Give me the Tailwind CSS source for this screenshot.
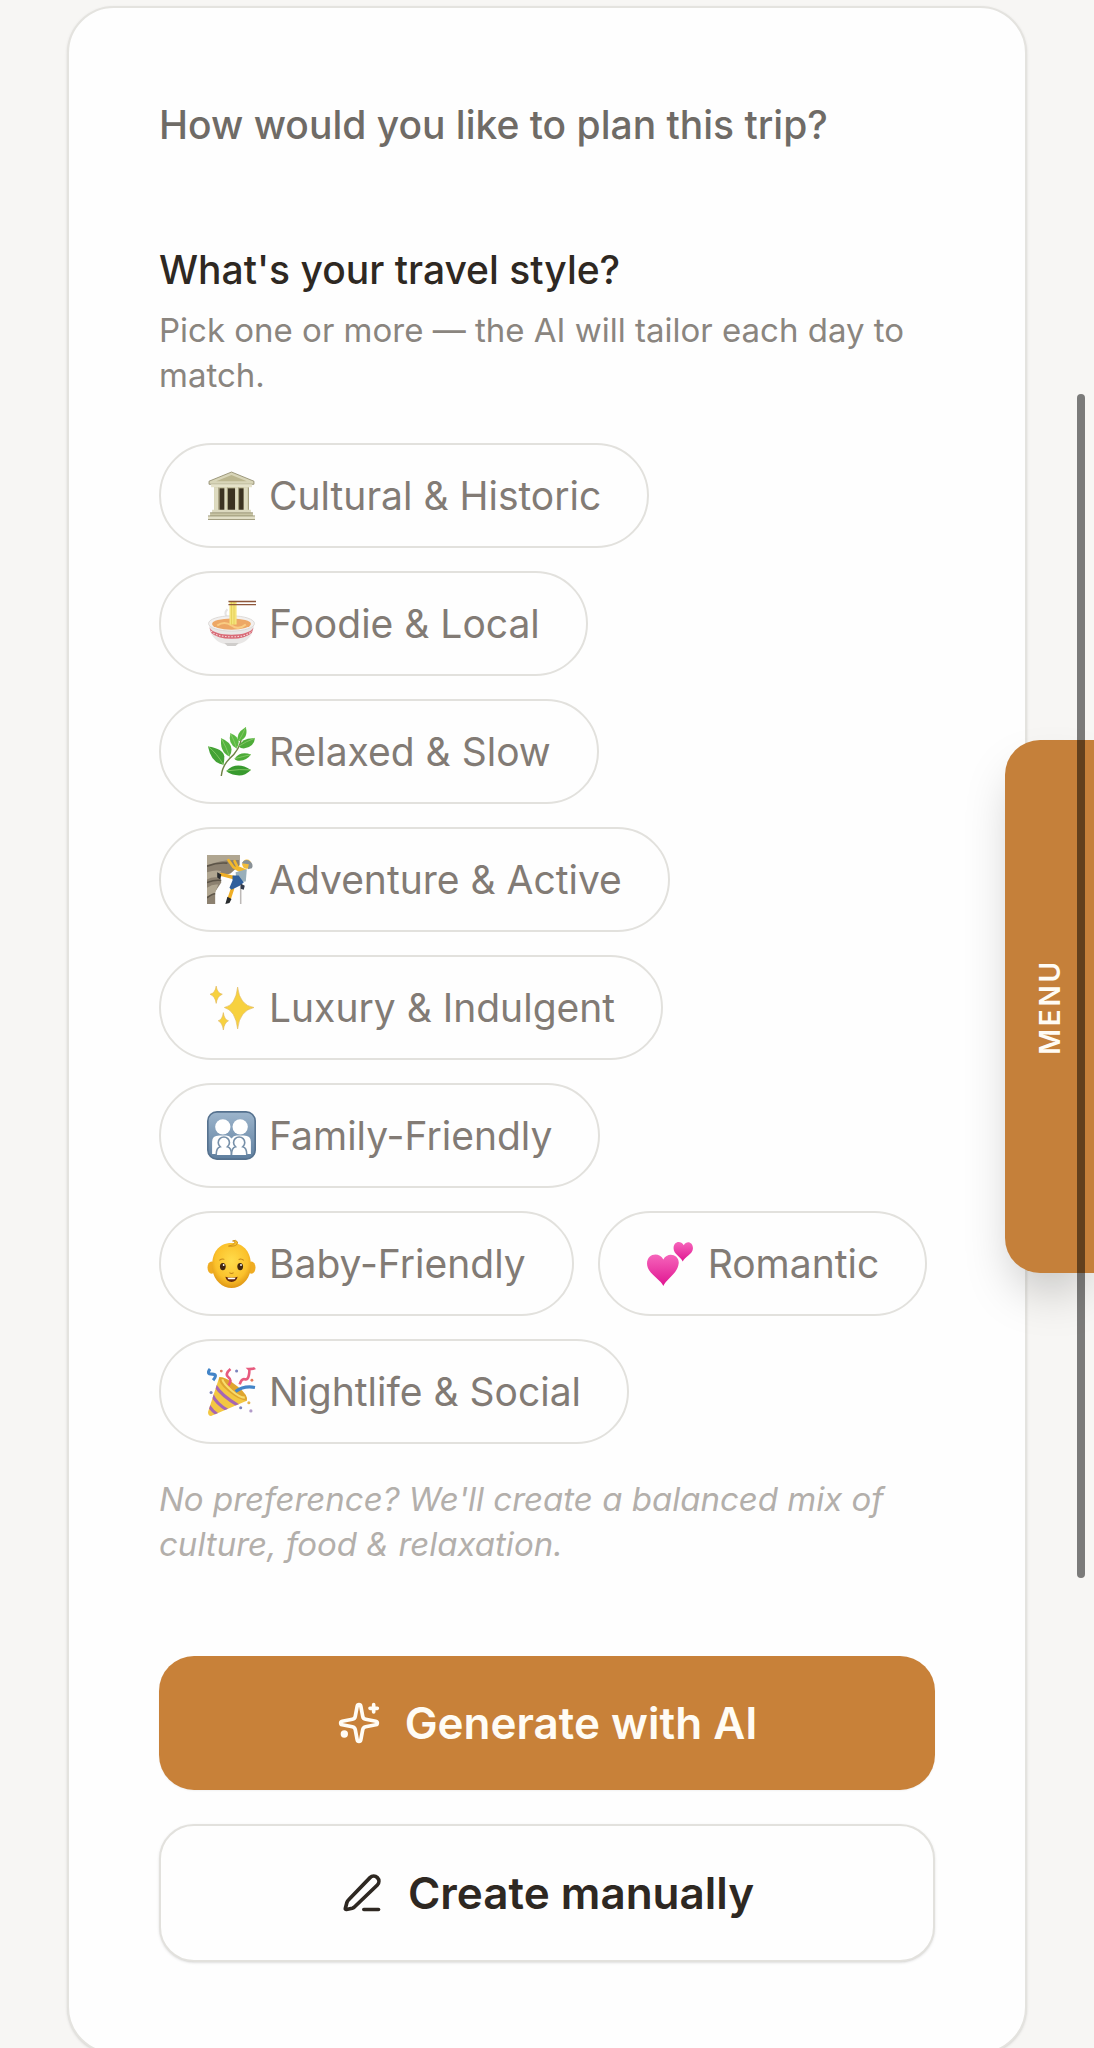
<!DOCTYPE html>
<html lang="en">
<head>
  <meta charset="UTF-8" />
  <meta name="viewport" content="width=device-width, initial-scale=1.0" />
  <title>Plan your trip</title>
  <script src="https://cdn.jsdelivr.net/npm/@tailwindcss/browser@4"></script>
</head>

<body class="relative bg-[#f7f6f4] pt-[6px] px-[67px] font-[Inter,sans-serif] text-[#2e2822] overflow-x-hidden">

  <!-- Planner card -->
  <main class="bg-[#fefefe] border-2 border-[#e4e3df] rounded-[47px] p-[90px] pt-[89px] shadow-sm">
    <h2 class="text-[39px] leading-[56px] font-medium text-[#6f6b66]">How would you like to plan this trip?</h2>

    <!-- Travel style -->
    <section class="mt-[89px]">
      <h3 class="text-[39px] leading-[56px] font-medium">What's your travel style?</h3>
      <p class="mt-[10px] text-[33px] leading-[45px] text-[#8a857f]">Pick one or more — the AI will tailor each day to match.</p>

      <div class="mt-[45px] flex flex-wrap gap-x-6 gap-y-[23px] text-[39px] leading-[53px] text-[#827b75]">
        <button type="button" class="flex items-center gap-[13px] border-2 border-[#e2e1dd] rounded-full px-[46px] py-6">
          <svg class="size-[49px]" viewBox="0 0 48 48" aria-hidden="true">
            <path d="M7 15h34v25H7z" fill="#bdb895" />
            <path d="M12 17h24v22H12z" fill="#3b3221" />
            <path d="M7 16h5v23H7zM17 16h3.500v23H17zM27.500 16h3.500v23h-3.500zM36 16h5v23h-5z" fill="#dedbc0" />
            <path d="M11.500 16v23M20 16v23M31 16v23M40.500 16v23" stroke="#a09a78" />
            <path d="M24 1L46 10v3H2v-3z" fill="#d8d5b8" stroke="#8c8768" stroke-width=".8" />
            <path d="M24 4l15 6H9z" fill="#bbb68f" />
            <path d="M4 13h40v3H4z" fill="#e5e2c9" />
            <path d="M5 38h38v3H5z" fill="#dcd9bf" />
            <path d="M3 41h42v3H3z" fill="#c9c5a5" />
            <path d="M1 44h46v3.500H1z" fill="#e3e0c8" />
            <path d="M3 41h42M1 44h46M1 47.500h46" stroke="#8f8a6b" stroke-width=".8" />
          </svg>
          Cultural &amp; Historic
        </button>
        <button type="button" class="flex items-center gap-[13px] border-2 border-[#e2e1dd] rounded-full px-[46px] py-6">
          <svg class="size-[49px]" viewBox="0 0 48 48" aria-hidden="true">
            <path d="M20 10q-4 4 0 8" fill="none" stroke="#e5e3e2" stroke-width="2" />
            <path d="M2 24c0 12 8 21 22 21s22-9 22-21z" fill="#e9e7e6" />
            <path d="M2.500 28q4 7 21.500 7t21.500-7l-1.500 5q-6 6-20 6T4 33z" fill="#d96c78" />
            <path d="M4 31.500q5 5.500 20 5.500t20-5.500" fill="none" stroke="#f7dde0" stroke-width="1" stroke-dasharray="1.500 1.500" />
            <path d="M17 43h14l-3 3h-8z" fill="#cfcdcb" />
            <ellipse cx="24" cy="24" rx="22.500" ry="7.500" fill="#f2f0ef" stroke="#d8d4d2" stroke-width=".8" />
            <ellipse cx="24" cy="24.500" rx="19" ry="5.500" fill="#eda765" />
            <path d="M10 26q7-5 14 0t14-1" fill="none" stroke="#f9cc83" stroke-width="2" />
            <path d="M22 2h7v23h-7z" fill="#f5e47b" />
            <path d="M24 2v23M26.500 2v23" stroke="#e2cc51" stroke-width=".7" />
            <path d="M21 2.500h27M21 5.500h27" stroke="#8d553a" stroke-width="1.400" />
          </svg>
          Foodie &amp; Local
        </button>
        <button type="button" class="flex items-center gap-[13px] border-2 border-[#e2e1dd] rounded-full px-[46px] py-6">
          <svg class="size-[49px]" viewBox="0 0 48 48" aria-hidden="true">
            <path d="M14 48q1-10 8-17 10-8 12-21" fill="none" stroke="#6e8145" stroke-width="1.400" />
            <path d="M1 19q15 2 16 10 0 5-1 8Q4 35 1 19z" fill="#43a235" />
            <path d="M14 11q10 4 10 11 0 4-2 7-10-5-8-18z" fill="#53b13e" />
            <path d="M23 6q8 3 8 9 0 3-2 6-9-5-6-15z" fill="#5bba43" />
            <path d="M38 0q3 11-7 14-4-7 7-14z" fill="#59b740" />
            <path d="M47 11q-1 9-11 10-3 0-5-2 4-9 16-8z" fill="#4eac39" />
            <path d="M43 27q-4 6-11 6-4 0-5-2 6-8 16-4z" fill="#4cab38" />
            <path d="M43 42q-7 7-15 5-6-1-9-4 10-10 24-1z" fill="#389a2e" />
            <path d="M1 19q9 7 15 18M14 11q5 9 8 18M23 6q4 8 6 15M38 0q-3 7-7 14M47 11q-9 3-16 8M43 27q-8 2-16 4M43 42q-11-1-24 1" fill="none" stroke="#8ccb6c" stroke-width=".8" />
          </svg>
          Relaxed &amp; Slow
        </button>
        <button type="button" class="flex items-center gap-[13px] border-2 border-[#e2e1dd] rounded-full px-[46px] py-6">
          <svg class="size-[49px]" viewBox="0 0 48 48" aria-hidden="true">
            <path d="M0 0h32v10l-9 8-10 3 1 6-6 9v12H0z" fill="#8c8170" />
            <path d="M0 0h32v5q-16-1-32 5zM0 17q9-3 14-1l-3 6q-6-1-11 2zM0 32q6-4 11-3l-3 8-8 4z" fill="#b0a691" />
            <path d="M0 11q10-4 20-3M0 27q8-3 14-2M0 42q5-4 8-4" fill="none" stroke="#5d5548" stroke-width="1.600" />
            <path d="M33 27v21" stroke="#bdb9b7" stroke-width="1.500" />
            <path d="M35 17l-9-5-5-7M37 15l-7-3-3-6" fill="none" stroke="#f3b82c" stroke-width="2.600" stroke-linecap="round" />
            <path d="M26 22l-12-3M25 33l-3 9" stroke="#efae25" stroke-width="3.400" stroke-linecap="round" />
            <path d="M28 17l11-3-1 12-9 1z" fill="#98aeb9" />
            <path d="M25 20h6l5 7-4 3-8 4-2-2 3-7z" fill="#2f5f9c" />
            <circle cx="39" cy="9" r="4.500" fill="#f3bd3a" />
            <path d="M34 8q3-5 8-2 4 3 2 7l-4 1 1-5z" fill="#899197" />
            <path d="M10 17l4 2-1 5-3-2zM20 41l4 2-2 4-4 1z" fill="#282b2e" />
            <path d="M33 28l4 2-1 4-3-1z" fill="#343b4b" />
          </svg>
          Adventure &amp; Active
        </button>
        <button type="button" class="flex items-center gap-[13px] border-2 border-[#e2e1dd] rounded-full px-[46px] py-6">
          <svg class="size-[49px]" viewBox="0 0 48 48" aria-hidden="true">
            <g fill="#f7d13f" stroke="#dfb75a" stroke-width=".6">
              <path d="M30 4q2 18 16 20-14 3-16 21-2-18-13-21 11-2 13-20z" />
              <path d="M9 3q1 7 6 8-5 2-6 9-1-7-6-9 5-1 6-8z" />
              <path d="M16 29q1 7 5 8-4 2-5 9-1-7-5-9 4-1 5-8z" />
            </g>
          </svg>
          Luxury &amp; Indulgent
        </button>
        <button type="button" class="flex items-center gap-[13px] border-2 border-[#e2e1dd] rounded-full px-[46px] py-6">
          <svg class="size-[49px]" viewBox="0 0 48 48" aria-hidden="true">
            <defs>
              <linearGradient id="tile" x1="0" y1="0" x2="0" y2="1">
                <stop offset="0" stop-color="#9db5cc" />
                <stop offset="1" stop-color="#5f7f9f" />
              </linearGradient>
            </defs>
            <rect x=".8" y=".8" width="46.400" height="46.400" rx="9" fill="url(#tile)" stroke="#56728f" stroke-width="1.600" />
            <g fill="#fff">
              <circle cx="15.500" cy="15.500" r="7.500" />
              <circle cx="32.500" cy="15.500" r="7.500" />
              <path d="M5 42V30q0-6 7-6h7q3 0 5 3 2-3 5-3h7q7 0 7 6v12z" />
            </g>
            <g fill="#fff" stroke="#7790a9" stroke-width="1.600">
              <path d="M9 43q0-7 4-8-2-2-2-4a5.500 5.500 0 0 1 11 0q0 2-2 4 4 1 4 8" />
              <path d="M24 43q0-7 4-8-2-2-2-4a5.500 5.500 0 0 1 11 0q0 2-2 4 4 1 4 8" />
            </g>
          </svg>
          Family-Friendly
        </button>
        <button type="button" class="flex items-center gap-[13px] border-2 border-[#e2e1dd] rounded-full px-[46px] py-6">
          <svg class="size-[49px]" viewBox="0 0 48 48" aria-hidden="true">
            <defs>
              <radialGradient id="skin" cx=".5" cy=".4" r=".6">
                <stop offset="0" stop-color="#ffdc4b" />
                <stop offset=".7" stop-color="#fbc12b" />
                <stop offset="1" stop-color="#df9614" />
              </radialGradient>
            </defs>
            <ellipse cx="4.500" cy="28" rx="4" ry="6" fill="#efac22" />
            <ellipse cx="43.500" cy="28" rx="4" ry="6" fill="#efac22" />
            <path d="M24 4c13 0 19 10 19 22 0 13-9 22-19 22S5 39 5 26C5 14 11 4 24 4z" fill="url(#skin)" />
            <path d="M21 7q9 1 9-4-2-3-5-1 3 0 2 2t-6 3z" fill="#f5bd2b" stroke="#c98b17" stroke-width=".8" />
            <ellipse cx="15.500" cy="27" rx="2.800" ry="3.600" fill="#42270f" />
            <ellipse cx="32.500" cy="27" rx="2.800" ry="3.600" fill="#42270f" />
            <circle cx="16.300" cy="25.500" r=".9" fill="#fff" />
            <circle cx="33.300" cy="25.500" r=".9" fill="#fff" />
            <path d="M12 21q3-2 5-1M31 20q3-1 5 1M22 33q2 1.500 4 0" fill="none" stroke="#c48619" stroke-width="1" />
            <path d="M18 37q6 2 12 0-1 5-6 5t-6-5z" fill="#63280e" />
            <path d="M20 38h8l-1 1.500h-6z" fill="#fff" />
          </svg>
          Baby-Friendly
        </button>
        <button type="button" class="flex items-center gap-[13px] border-2 border-[#e2e1dd] rounded-full px-[46px] py-6">
          <svg class="size-[49px]" viewBox="0 0 48 48" aria-hidden="true">
            <defs>
              <linearGradient id="pink" x1="0" y1="0" x2="0" y2="1">
                <stop offset="0" stop-color="#f665bb" />
                <stop offset="1" stop-color="#e01591" />
              </linearGradient>
            </defs>
            <path d="M17 46C14 39 1 34 1 24c0-10 12-12 16-4 4-8 16-5 15 4-1 10-12 15-15 22z" fill="url(#pink)" />
            <path d="M36 22c-2-5-9-7-9-13 0-7 7-8 10-3 3-5 9-3 9 3 0 6-8 8-10 13z" fill="url(#pink)" />
          </svg>
          Romantic
        </button>
        <button type="button" class="flex items-center gap-[13px] border-2 border-[#e2e1dd] rounded-full px-[46px] py-6">
          <svg class="size-[49px]" viewBox="0 0 48 48" aria-hidden="true">
            <defs>
              <clipPath id="cone"><path d="M12 10q5-1 14 7 10 8 13 16L4 48q-3 0-3-4z" /></clipPath>
            </defs>
            <path d="M12 10q5-1 14 7 10 8 13 16L4 48q-3 0-3-4z" fill="#f3c742" />
            <g clip-path="url(#cone)" fill="none" stroke="#a566b4" stroke-width="3">
              <path d="M8 18q6 10 23 20M5 27q4 9 16 16M1 37q4 6 11 11" />
            </g>
            <path d="M12 10q-2 5 9 14t18 9q2-5-9-14T12 10z" fill="#dfa52f" />
            <path d="M15 12q1 4 9 11t13 7" fill="none" stroke="#f8dc6d" stroke-width="2" />
            <path d="M3 2q-4 5 2 5t1 6M28 24q8-6 19-4" fill="none" stroke="#4385c8" stroke-width="3" />
            <path d="M21 18q4-5 0-8t2-8M32 17q2-6 5-5t4-4 0-6q5 0 6-1" fill="none" stroke="#e75b7e" stroke-width="2.600" />
            <g fill="#7b83bd">
              <circle cx="29" cy="4" r="1.500" />
              <circle cx="4" cy="25" r="1.500" />
              <circle cx="33" cy="40" r="1.500" />
            </g>
            <circle cx="41" cy="35" r="1.500" fill="#e5b650" />
            <circle cx="43" cy="43" r="1.600" fill="#b29bc9" />
            <circle cx="44" cy="13" r="1.400" fill="#e5795b" />
            <circle cx="14" cy="4" r="1.400" fill="#df7a64" />
          </svg>
          Nightlife &amp; Social
        </button>
      </div>

      <p class="mt-[33px] text-[33px] leading-[45px] italic text-[#b3afab]">No preference? We'll create a balanced mix of culture, food &amp; relaxation.</p>
    </section>

    <!-- Actions -->
    <div class="mt-[89px] flex flex-col gap-[34px] text-[44px] leading-[62px] font-semibold">
      <button type="button" class="flex items-center justify-center gap-6 bg-[#c88139] text-[#fffcf5] rounded-[35px] py-9 shadow-xs">
        <svg class="size-[44px]" viewBox="0 0 24 24" fill="none" stroke="currentColor" stroke-width="2" stroke-linecap="round" stroke-linejoin="round" aria-hidden="true">
          <path d="M11.017 2.814a1 1 0 0 1 1.966 0l1.051 5.558a2 2 0 0 0 1.594 1.594l5.558 1.051a1 1 0 0 1 0 1.966l-5.558 1.051a2 2 0 0 0-1.594 1.594l-1.051 5.558a1 1 0 0 1-1.966 0l-1.051-5.558a2 2 0 0 0-1.594-1.594l-5.558-1.051a1 1 0 0 1 0-1.966l5.558-1.051a2 2 0 0 0 1.594-1.594z" />
          <path d="M20 2v4M22 4h-4" />
          <circle cx="4" cy="18" r="1" fill="currentColor" />
        </svg>
        Generate with AI
      </button>
      <button type="button" class="flex items-center justify-center gap-6 bg-[#fefefe] border-2 border-[#e2e1dd] rounded-[35px] py-9 shadow-sm">
        <svg class="size-[44px]" viewBox="0 0 24 24" fill="none" stroke="currentColor" stroke-width="2" stroke-linecap="round" stroke-linejoin="round" aria-hidden="true">
          <path d="M13 21h8" />
          <path d="M16.376 3.622a1 1 0 0 1 4 4L8 19.500a3 3 0 0 1-1.300.8L3.500 21a.5.5 0 0 1-.6-.6l.9-3.300a3 3 0 0 1 .8-1.300z" />
        </svg>
        Create manually
      </button>
    </div>
  </main>

  <!-- Side menu tab -->
  <button type="button" class="absolute right-0 top-[740px] w-[89px] h-[533px] flex items-center justify-center bg-[#c5803a] text-[#fffcf5] rounded-l-[35px] shadow-2xl">
    <span class="[writing-mode:vertical-rl] rotate-180 text-[28px] leading-[40px] font-semibold tracking-widest">MENU</span>
  </button>

  <!-- Scroll indicator -->
  <div class="absolute right-[9px] top-[394px] w-2 h-[1184px] rounded-full bg-black/50"></div>

</body>
</html>
